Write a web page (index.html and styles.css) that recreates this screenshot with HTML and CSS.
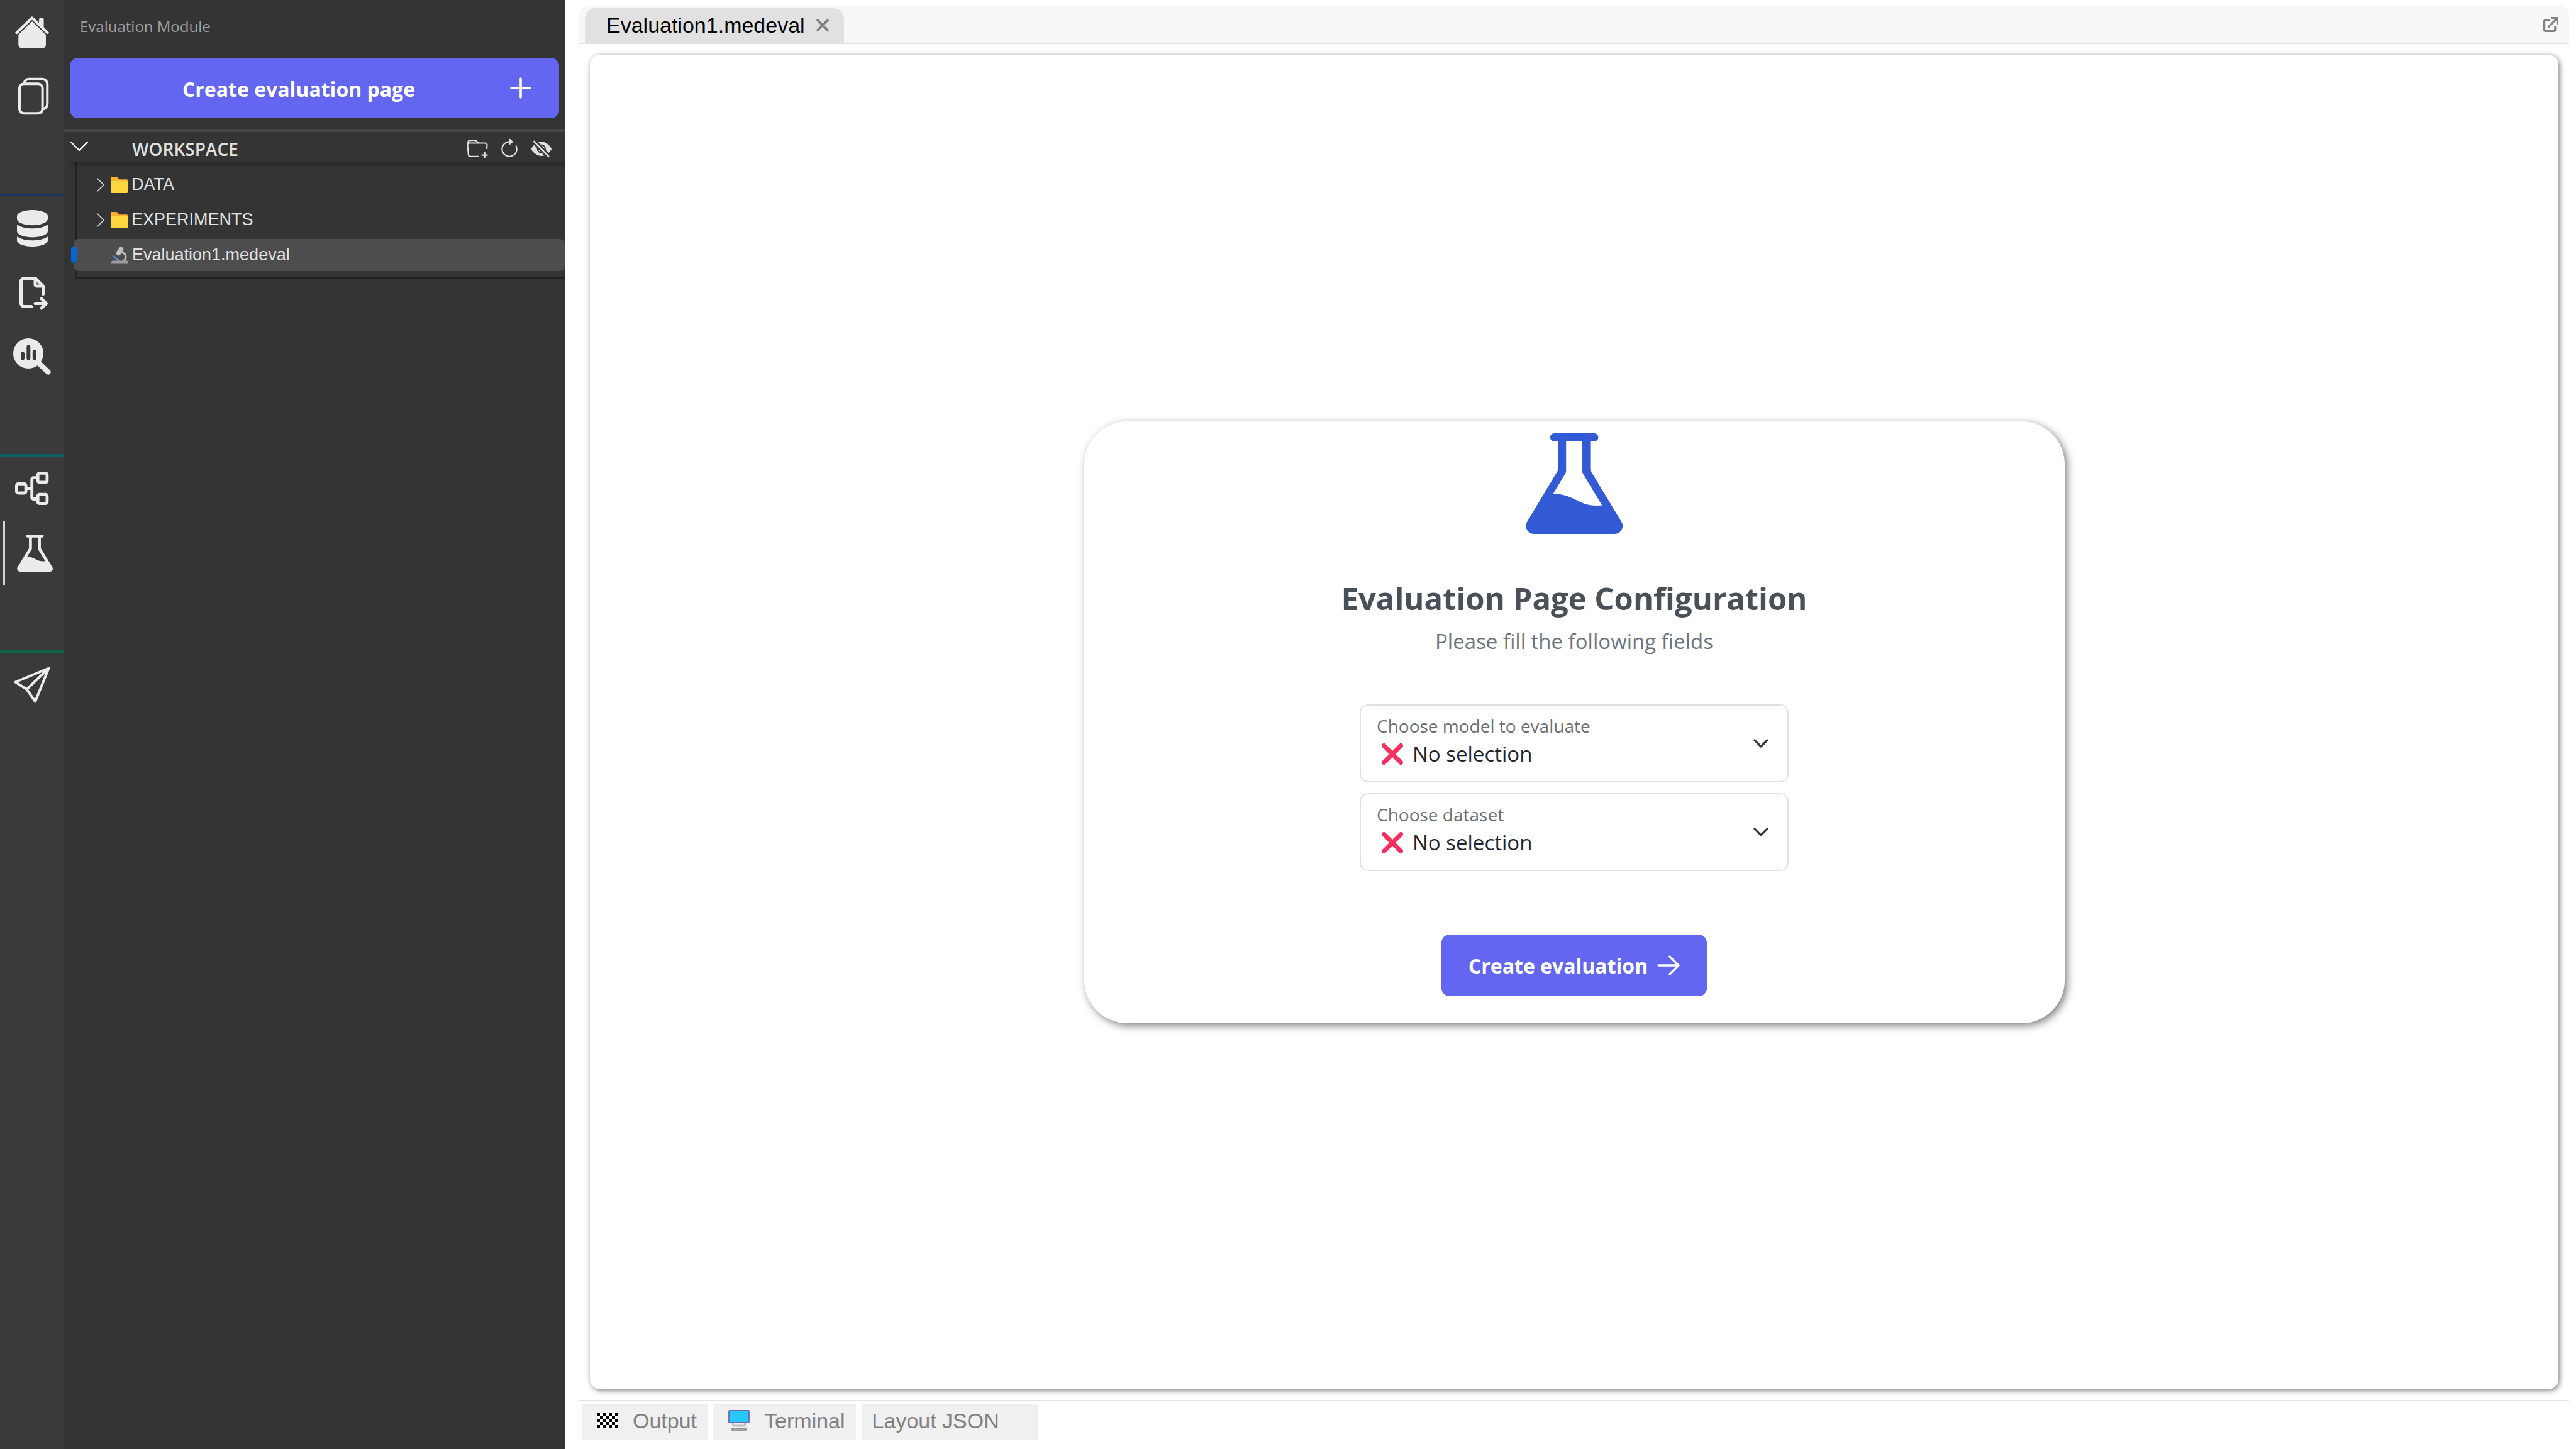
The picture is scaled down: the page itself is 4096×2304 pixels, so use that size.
FILE: index.html
```html
<!DOCTYPE html>
<html lang="en">
<head>
<meta charset="utf-8">
<title>Evaluation Module</title>
<link rel="stylesheet" href="styles.css">
</head>
<body>
<svg class="defs" aria-hidden="true">
  <symbol id="flask" viewBox="66 66 864 900">
    <path fill="currentColor" fill-rule="evenodd" d="M319 66H678a36 36 0 0 1 0 72H642V396L918 852A72 72 0 0 1 860 966H136A72 72 0 0 1 78 856L354 396V138H319a36 36 0 0 1 0-72ZM426 138V402Q426 415 420 425L311 605C380 608 440 625 510 660C600 708 660 720 747 710L576 425Q570 415 570 402V138Z"/>
  </symbol>
  <symbol id="folder" viewBox="0 0 27 26">
    <path fill="#ffb02e" d="M0 1.500a1.500 1.500 0 0 1 1.500-1.500H8.500q1.500 0 2.500 1.200L13.500 4.200H25.500a1.500 1.500 0 0 1 1.500 1.500V14H0z"/>
    <rect y="6.700" width="27" height="19.300" rx="1.500" fill="#fcd53f"/>
  </symbol>
  <symbol id="caret" viewBox="0 0 12 22">
    <path d="M1 1L11 11L1 21" fill="none" stroke="#ddd" stroke-width="1.600" stroke-linecap="round" stroke-linejoin="round"/>
  </symbol>
  <symbol id="cross" viewBox="0 0 34 34">
    <path d="M3.500 3.500L30.500 30.500M30.500 3.500L3.500 30.500" stroke="#f92f60" stroke-width="7" stroke-linecap="round"/>
  </symbol>
  <symbol id="down" viewBox="0 0 24 14">
    <path d="M2 2L12 12L22 2" fill="none" stroke="#343a40" stroke-width="3.200" stroke-linecap="round" stroke-linejoin="round"/>
  </symbol>
</svg>
<div class="app">
  <nav class="rail" aria-label="Modules">
    <div class="rail-group">
      <a class="rail-item" href="#home" aria-label="Home">
        <svg width="54" height="51" viewBox="0 0 54 51"><path d="M2.500 26L27 2.500L51.500 26" fill="none" stroke="#ebebeb" stroke-width="4.400" stroke-linecap="round" stroke-linejoin="round"/><path fill="#ebebeb" d="M38 13V5a2.200 2.200 0 0 1 2.200-2.200h3.200A2.200 2.200 0 0 1 45.600 5v15zM27.200 8L49 29.300V45a6 6 0 0 1-6 6H11.300a6 6 0 0 1-6-6V29.300z"/></svg>
      </a>
      <a class="rail-item rail-files" href="#files" aria-label="Files">
        <svg width="50" height="60" viewBox="-1 -1 50 60"><g fill="none" stroke="#ebebeb" stroke-width="4"><rect x="2" y="9.300" width="36.600" height="47" rx="7"/><path d="M9.700 9.500V8.500a6.700 6.700 0 0 1 6.700-6.700H38.500a7.800 7.800 0 0 1 7.800 7.800V41.500a7.800 7.800 0 0 1-7.800 7.800"/></g></svg>
      </a>
    </div>
    <div class="rail-group rail-blue">
      <a class="rail-item" href="#database" aria-label="Database">
        <svg width="49" height="58" viewBox="0 0 12 14" preserveAspectRatio="none" fill="#ebebeb"><path d="M0 2.400C0 1 2.700 0 6 0s6 1 6 2.400v1c0 1.400-2.700 2.430-6 2.430S0 4.800 0 3.400z"/><path d="M0 5.600Q2.200 7.050 6 7.050T12 5.600V8.100C12 9.500 9.300 10.450 6 10.450S0 9.500 0 8.100z"/><path d="M0 10.200Q2.200 11.650 6 11.650T12 10.200V11.600C12 13 9.300 14 6 14S0 13 0 11.600z"/></svg>
      </a>
      <a class="rail-item" href="#export" aria-label="File export">
        <svg width="60" height="60" viewBox="0 0 24 24" fill="none" stroke="#ebebeb" stroke-width="2" stroke-linecap="round" stroke-linejoin="round"><path d="M14 3v4a1 1 0 0 0 1 1h4"/><path d="M11.500 21H7a2 2 0 0 1-2-2V5a2 2 0 0 1 2-2h7l5 5v5m-5 6h7m-3-3l3 3l-3 3"/></svg>
      </a>
      <a class="rail-item" href="#explore" aria-label="Exploratory analysis">
        <svg width="60" height="58" viewBox="0 0 60 58"><circle cx="24" cy="24" r="24" fill="#ebebeb"/><path d="M38 37L55.500 53.500" stroke="#ebebeb" stroke-width="8.500" stroke-linecap="round"/><g fill="#3a3a3a"><rect x="12" y="21.500" width="6" height="13" rx="3"/><rect x="21.300" y="10.600" width="6" height="24" rx="3"/><rect x="30.800" y="18" width="6" height="16.500" rx="3"/></g></svg>
      </a>
    </div>
    <div class="rail-group rail-teal">
      <a class="rail-item" href="#learning" aria-label="Learning">
        <svg width="54" height="54" viewBox="0 0 54 54" fill="none" stroke="#ebebeb" stroke-width="4.800"><rect x="2.400" y="19.400" width="14.700" height="14.600" rx="2.500"/><rect x="36.200" y="2.400" width="14.700" height="14.600" rx="2.500"/><rect x="36.200" y="36.100" width="14.700" height="14.600" rx="2.500"/><path d="M17 26.700H26.700M35 9.700H29.200a2.500 2.500 0 0 0-2.500 2.500V41a2.500 2.500 0 0 0 2.500 2.500H35"/></svg>
      </a>
      <a class="rail-item rail-active" href="#evaluation" aria-label="Evaluation">
        <svg class="rail-flask" width="57" height="59"><use href="#flask"/></svg>
      </a>
    </div>
    <div class="rail-group rail-green">
      <a class="rail-item" href="#application" aria-label="Application">
        <svg width="58" height="58" viewBox="0 0 58 58" fill="none" stroke="#ebebeb" stroke-width="4" stroke-linecap="round" stroke-linejoin="round"><path d="M55.500 2.500L2.500 24.500L20.500 36L34 55.500ZM20.500 36L55.500 2.500"/></svg>
      </a>
    </div>
  </nav>

  <aside class="sidebar">
    <p class="side-title">Evaluation Module</p>
    <button class="primary create-page" type="button">
      <span class="create-label">Create evaluation page</span>
      <svg width="34" height="34" viewBox="0 0 34 34"><path d="M17 2V32M2 17H32" stroke="#fff" stroke-width="3.600" stroke-linecap="round"/></svg>
    </button>
    <div class="ws-head">
      <svg class="ws-caret" width="30" height="17" viewBox="0 0 30 17"><path d="M2 2L15 15L28 2" fill="none" stroke="#fff" stroke-width="2.200" stroke-linecap="round" stroke-linejoin="round"/></svg>
      <h2 class="ws-title">WORKSPACE</h2>
      <button class="icon-btn" type="button" aria-label="New folder"><svg width="34" height="34" viewBox="0 0 16 16" fill="currentColor"><path d="m.5 3 .04.87a1.990 1.990 0 0 0-.342 1.311l.637 7A2 2 0 0 0 2.826 14H9v-1H2.826a1 1 0 0 1-.995-.91l-.637-7A1 1 0 0 1 2.190 4h11.620a1 1 0 0 1 .996 1.090L14.540 8h1.005l.256-2.819A2 2 0 0 0 13.810 3H9.828a2 2 0 0 1-1.414-.586l-.828-.828A2 2 0 0 0 6.172 1H2.500a2 2 0 0 0-2 2zm5.672-1a1 1 0 0 1 .707.293L7.586 3H2.190c-.24 0-.47.042-.683.12L1.500 2.980a1 1 0 0 1 1-.98h3.672z"/><path d="M13.500 10a.5.5 0 0 1 .5.5V12h1.500a.5.5 0 1 1 0 1H14v1.500a.5.5 0 1 1-1 0V13h-1.500a.5.5 0 0 1 0-1H13v-1.500a.5.5 0 0 1 .5-.5z"/></svg></button>
      <button class="icon-btn" type="button" aria-label="Refresh"><svg width="34" height="34" viewBox="0 0 16 16" fill="currentColor"><path d="M8 3a5 5 0 1 0 4.546 2.914.5.5 0 0 1 .908-.417A6 6 0 1 1 8 2v1z"/><path d="M8 4.466V.534a.25.25 0 0 1 .41-.192l2.360 1.966c.12.1.12.284 0 .384L8.410 4.658A.25.25 0 0 1 8 4.466z"/></svg></button>
      <button class="icon-btn" type="button" aria-label="Hide hidden files"><svg width="34" height="34" viewBox="0 -3 35 34"><path fill="currentColor" d="M0 14Q8 2 17.500 2Q27 2 34.200 14Q27 25.500 17.500 25.500Q8 25.500 0 14z"/><circle cx="17.300" cy="13.700" r="6.300" fill="none" stroke="#343434" stroke-width="2"/><path d="M4.500 .7L29.800 26.700" stroke="#343434" stroke-width="8"/><path d="M4.500 .7L29.800 26.700" stroke="currentColor" stroke-width="2.600"/></svg></button>
    </div>
    <ul class="tree">
      <li class="tree-row"><svg class="caret" width="12" height="22"><use href="#caret"/></svg><svg class="tree-icon" width="27" height="26"><use href="#folder"/></svg><span>DATA</span></li>
      <li class="tree-row"><svg class="caret" width="12" height="22"><use href="#caret"/></svg><svg class="tree-icon" width="27" height="26"><use href="#folder"/></svg><span>EXPERIMENTS</span></li>
      <li class="tree-row tree-selected"><svg class="tree-icon" width="27" height="27" viewBox="0 0 27 27"><path d="M15.500 8.700C25 11 25 20 18 24" fill="none" stroke="#bebebe" stroke-width="3"/><path d="M3.200 15.500L14 24" stroke="#4f8df9" stroke-width="2.400" stroke-linecap="round"/><path d="M17 1.600L15.500 4" stroke="#636363" stroke-width="5" stroke-linecap="round"/><path d="M15.500 4.500L11.500 10.500" stroke="#bebebe" stroke-width="7.500" stroke-linecap="round"/><path d="M9 7.500L14 11.500" stroke="#e0e0e0" stroke-width="1.200"/><path fill="#9b9b9b" d="M0 26.500V25a2.500 2.500 0 0 1 2.500-2.500h22A2.500 2.500 0 0 1 27 25v1.500z"/></svg><span>Evaluation1.medeval</span></li>
    </ul>
  </aside>

  <main class="main">
    <div class="tabbar">
      <div class="tab">
        <button class="tab-name" type="button">Evaluation1.medeval</button>
        <button class="tab-close" type="button" aria-label="Close tab"><svg width="22" height="22" viewBox="0 0 22 22"><path d="M2 2L20 20M20 2L2 20" stroke="#808080" stroke-width="3.800"/></svg></button>
      </div>
      <button class="popout" type="button" aria-label="Open in new window"><svg width="24" height="24" viewBox="0 0 24 24" fill="none" stroke="#808080" stroke-width="3.200" stroke-linecap="round" stroke-linejoin="round"><path d="M8.600 5.200H3.400a1.800 1.800 0 0 0-1.800 1.800V20.600a1.800 1.800 0 0 0 1.800 1.800H17a1.800 1.800 0 0 0 1.800-1.800V15.400M13.700 1.600H22.400V10.300M22 2L8.600 15.600"/></svg></button>
    </div>
    <section class="panel">
      <form class="card">
        <svg class="card-flask" width="154" height="160"><use href="#flask"/></svg>
        <h1 class="card-title">Evaluation Page Configuration</h1>
        <p class="card-sub">Please fill the following fields</p>
        <div class="fields">
          <div class="field">
            <select class="field-select" id="model"><option>No selection</option></select>
            <label class="field-label" for="model">Choose model to evaluate</label>
            <svg class="field-cross" width="34" height="34"><use href="#cross"/></svg>
            <svg class="field-down" width="24" height="14"><use href="#down"/></svg>
          </div>
          <div class="field">
            <select class="field-select" id="dataset"><option>No selection</option></select>
            <label class="field-label" for="dataset">Choose dataset</label>
            <svg class="field-cross" width="34" height="34"><use href="#cross"/></svg>
            <svg class="field-down" width="24" height="14"><use href="#down"/></svg>
          </div>
        </div>
        <button class="primary submit" type="button">
          <span>Create evaluation</span>
          <svg width="36" height="32" viewBox="0 0 36 32"><path d="M2 16H34M20 2L34 16L20 30" fill="none" stroke="#fff" stroke-width="3.400" stroke-linecap="round" stroke-linejoin="round"/></svg>
        </button>
      </form>
    </section>
    <div class="dock">
      <button class="dock-tab" type="button">
        <svg width="34" height="24" viewBox="0 0 7 5" preserveAspectRatio="none" shape-rendering="crispEdges"><rect width="7" height="5" fill="#fff"/><path d="M0 0h1v1h-1zM2 0h1v1h-1zM4 0h1v1h-1zM6 0h1v1h-1zM1 1h1v1h-1zM3 1h1v1h-1zM5 1h1v1h-1zM0 2h1v1h-1zM2 2h1v1h-1zM4 2h1v1h-1zM6 2h1v1h-1zM1 3h1v1h-1zM3 3h1v1h-1zM5 3h1v1h-1zM0 4h1v1h-1zM2 4h1v1h-1zM4 4h1v1h-1zM6 4h1v1h-1z"/></svg>
        <span>Output</span>
      </button>
      <button class="dock-tab" type="button">
        <svg width="34" height="34" viewBox="0 0 34 34"><path d="M7.500 20V23.500q0 1.500 1.500 1.500H25q1.500 0 1.500-1.500V20" fill="none" stroke="#bebebe" stroke-width="3"/><rect x="1" y="1" width="32" height="19" rx="1" fill="#26c9fc" stroke="#7166b3" stroke-width="1.800"/><rect x="4" y="28" width="26" height="6" rx="1" fill="#a8a8a8"/><path d="M5.500 29.800H28.500M5.500 31.800H28.500" stroke="#7d7d7d" stroke-width="1" stroke-dasharray="1.300 .9"/></svg>
        <span>Terminal</span>
      </button>
      <button class="dock-tab dock-wide" type="button"><span>Layout JSON</span></button>
    </div>
  </main>
</div>
</body>
</html>
```
FILE: styles.css
```css
*, *::before, *::after { box-sizing: border-box; }

body {
  margin: 0;
  background: #fff;
  font-family: "Open Sans", "Noto Sans", sans-serif;
}

button, select { margin: 0; border: 0; font-family: inherit; }
button { padding: 0; background: none; cursor: pointer; }
svg { display: block; flex: none; }
h1, h2, p, ul { margin: 0; padding: 0; }
.defs { position: absolute; width: 0; height: 0; }

.app {
  display: grid;
  grid-template-columns: 102px 796px minmax(0, 1fr);
  min-height: 100vh;
}

/* Module rail */
.rail { background: #3a3a3a; }
.rail-group { padding-bottom: 104px; }
.rail-blue { border-top: 4px solid #1f3568; }
.rail-teal { border-top: 4px solid #0c6064; }
.rail-green { border-top: 4px solid #0d6347; }
.rail-item {
  position: relative;
  display: flex;
  align-items: center;
  justify-content: center;
  height: 102px;
}
.rail-files { padding-left: 4px; }
.rail-active { padding-left: 8px; }
.rail-active::before {
  content: "";
  position: absolute;
  inset: 0 auto 0 4px;
  width: 4px;
  background: #d3d3d3;
}
.rail-flask { color: #ebebeb; }

/* Sidebar */
.sidebar { background: #343434; color: #e0e0e0; }
.side-title {
  height: 92px;
  padding: 22px 25px;
  font-size: 24px;
  line-height: 40px;
  color: #a0a0a0;
}
.primary {
  display: flex;
  align-items: center;
  border-radius: 13px;
  background: #6366f1;
  color: #fff;
  font-size: 32px;
  font-weight: 700;
  line-height: 44px;
}
.primary span { padding-top: 3px; }
.create-page {
  width: calc(100% - 18px);
  height: 96px;
  margin: 0 9px 17px;
  padding: 0 44px 0 28px;
}
.create-label { flex: 1; text-align: center; }
.ws-head {
  position: relative;
  display: flex;
  align-items: center;
  gap: 17px;
  height: 53px;
  padding: 6px 20px 0 9px;
  border-top: 5px solid #444;
  box-shadow: 8px 8px 8px -4px rgba(0, 0, 0, .25);
  clip-path: inset(0 0 -20px 0);
}
.ws-caret { margin-bottom: 10px; }
.ws-title {
  flex: 1;
  padding-left: 52px;
  font-size: 28px;
  font-weight: 600;
  line-height: 40px;
}
.icon-btn { color: #e0e0e0; }
.tree {
  margin-left: 18px;
  padding: 7px 0 5px;
  border: solid #222;
  border-width: 0 0 2px 2px;
  list-style: none;
  font: 27px/51px "Liberation Sans", Arial, sans-serif;
}
.tree-row {
  display: flex;
  align-items: center;
  height: 51px;
  margin: 3px 0 5px;
  padding-left: 32px;
}
.caret { margin-right: 10px; }
.tree-icon { margin-right: 6px; }
.tree-selected {
  position: relative;
  margin-left: -5px;
  padding-left: 60px;
  border-radius: 8px;
  background: #4d4d4d;
}
.tree-selected::before {
  content: "";
  position: absolute;
  top: 12px;
  left: -4px;
  width: 9px;
  height: 26px;
  border-radius: 5px;
  background: #0366d6;
}

/* Main area */
.main {
  display: flex;
  flex-direction: column;
  padding: 9px 11px 14px 23px;
  font-family: "Liberation Sans", Arial, sans-serif;
}
.tabbar {
  display: flex;
  align-items: center;
  justify-content: space-between;
  height: 61px;
  padding: 4px 17px 0 9px;
  border-bottom: 2px solid #e1e1e1;
  border-radius: 16px 16px 0 0;
  background: #f7f7f7;
}
.tab {
  display: flex;
  align-items: center;
  gap: 17px;
  height: 55px;
  padding: 0 23px 2px 34px;
  border-radius: 17px 17px 0 0;
  background: #e1e1e1;
}
.tab-name { font-size: 34px; line-height: 40px; color: #000; }
.popout { padding-bottom: 4px; }
.panel {
  display: flex;
  flex: 1;
  align-items: center;
  justify-content: center;
  margin: 17px;
  padding: 0 6px;
  border-radius: 16px;
  box-shadow: 2px 2px 9px rgba(0, 0, 0, .5);
  font-family: "Open Sans", "Noto Sans", sans-serif;
}
.card {
  display: flex;
  flex-direction: column;
  align-items: center;
  width: 50%;
  padding: 19px 0 43px;
  border-radius: 68px;
  box-shadow: 4px 4px 13px rgba(0, 0, 0, .5);
}
.card-flask { color: #325ad4; }
.card-title {
  margin-top: 72px;
  font-size: 49px;
  font-weight: 700;
  line-height: 60px;
  color: #495057;
}
.card-sub {
  margin-top: 17px;
  font-size: 33px;
  line-height: 44px;
  color: #6c757d;
}
.fields {
  display: grid;
  gap: 17px;
  width: 682px;
  margin: 78px 0 101px;
}
.field { display: grid; height: 124px; }
.field > * { grid-area: 1 / 1; }
.field > :not(select) { pointer-events: none; }
.field-select {
  appearance: none;
  width: 100%;
  padding: 45px 60px 12px 82px;
  border: 2px solid #dee2e6;
  border-radius: 13px;
  background: #fff;
  color: #212529;
  font-size: 33px;
}
.field-label {
  align-self: start;
  padding: 15px 27px;
  font-size: 28px;
  line-height: 38px;
  color: #6c7074;
}
.field-cross { margin: 62px 0 0 35px; }
.field-down { align-self: center; justify-self: end; margin-right: 32px; }
.submit { gap: 15px; height: 98px; padding: 0 43px; }

/* Bottom dock */
.dock {
  display: flex;
  gap: 9px;
  padding: 4px 4px 0;
  border-top: 2px solid #e1e1e1;
}
.dock-tab {
  display: flex;
  align-items: center;
  gap: 23px;
  height: 58px;
  padding: 0 17px 4px 24px;
  background: #f0f0f0;
  color: #808080;
  font-size: 34px;
  line-height: 40px;
}
.dock-wide { padding: 0 62px 4px 17px; }
```
